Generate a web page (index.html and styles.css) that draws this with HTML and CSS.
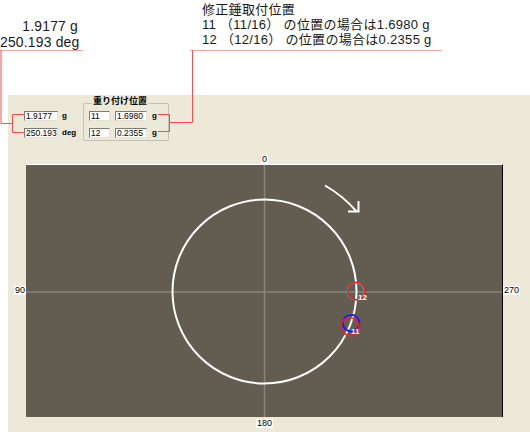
FILE: index.html
```html
<!DOCTYPE html>
<html lang="ja">
<head>
<meta charset="utf-8">
<title>修正錘取付位置</title>
<link rel="stylesheet" href="styles.css">
</head>
<body>
<div class="page">
  <header class="top">
    <div class="result">
      <div>1.9177 g</div>
      <div>250.193 deg</div>
    </div>
    <div class="advice">
      <div>修正錘取付位置</div>
      <div>11 （11/16） の位置の場合は1.6980 g</div>
      <div>12 （12/16） の位置の場合は0.2355 g</div>
    </div>
  </header>

  <main class="panel">
    <div class="controls">
      <div class="vals">
        <div class="row"><span class="box w34">1.9177</span><span class="unit">g</span></div>
        <div class="row row2"><span class="box w34">250.193</span><span class="unit">deg</span></div>
      </div>
      <div class="group">
        <span class="group-title">重り付け位置</span>
        <div class="row"><span class="box w21">11</span><span class="box w32">1.6980</span><span class="unit">g</span></div>
        <div class="row row2"><span class="box w21">12</span><span class="box w32">0.2355</span><span class="unit">g</span></div>
      </div>
    </div>

    <div class="chart">
      <span class="lbl lbl-top">0</span>
      <span class="lbl lbl-left">90</span>
      <div class="plot">
        <svg class="plot-svg" width="476" height="252" viewBox="0 0 476 252">
          <line class="axis" x1="0" y1="127" x2="476" y2="127"/>
          <line class="axis" x1="238.5" y1="0" x2="238.5" y2="252"/>
          <circle cx="238.5" cy="126.5" r="92" fill="none" stroke="#fff" stroke-width="2"/>
          <path d="M 299 20.5 A 122 122 0 0 1 330.6 46.5" fill="none" stroke="#fff" stroke-width="2"/>
          <path d="M 322 46.5 H 332.5 V 36" fill="none" stroke="#fff" stroke-width="2"/>
          <circle cx="329.5" cy="126.2" r="8.5" fill="none" stroke="#18b8c0" stroke-width="1.5"/>
          <circle cx="330.3" cy="126" r="8.8" fill="none" stroke="#ff1a1a" stroke-width="1.5"/>
          <text class="mk" x="332" y="134.5">12</text>
          <circle cx="325.1" cy="157.5" r="8.5" fill="none" stroke="#b8b020" stroke-width="1"/>
          <circle cx="325.1" cy="158" r="8.3" fill="none" stroke="#1a1aff" stroke-width="2"/>
          <circle cx="324" cy="161.5" r="9" fill="none" stroke="#ff1a1a" stroke-width="1.5"/>
          <text class="mk" x="325" y="169">11</text>
        </svg>
      </div>
      <span class="lbl lbl-right">270</span>
      <span class="lbl lbl-bottom">180</span>
    </div>
  </main>

  <svg class="wires" width="530" height="432" viewBox="0 0 530 432">
    <polyline points="1,50 1,123.5 12.5,123.5" />
    <polyline points="24,114.5 12.5,114.5 12.5,132.5 24,132.5" />
    <polyline points="192.5,50 192.5,122.5 169.5,122.5" />
    <polyline points="158,114.5 169.5,114.5 169.5,131.5 158,131.5" />
  </svg>
</div>
</body>
</html>
```

FILE: styles.css
```css
* { box-sizing: border-box; }

html, body {
  margin: 0;
  padding: 0;
  background: #fff;
}

.page {
  position: relative;
  width: 530px;
  height: 432px;
  overflow: hidden;
  font-family: "Noto Sans CJK JP", sans-serif;
  color: #000;
}

/* ---------- top text ---------- */
.top {
  display: flex;
  height: 95px;
}

.result {
  width: 83px;
  height: 51px;
  padding: 18px 5px 0 0;
  font-family: "Liberation Sans", "Noto Sans CJK JP", sans-serif;
  font-size: 13.9px;
  line-height: 16px;
  letter-spacing: 0.2px;
  text-align: right;
  white-space: nowrap;
  color: #1a1a1a;
  border-bottom: 1px solid #f3a4a4;
}

.advice {
  margin-left: 107px;
  width: 252px;
  height: 51px;
  padding: 2px 0 0 12px;
  font-family: "Liberation Sans", "Noto Sans CJK JP", sans-serif;
  font-size: 13px;
  line-height: 15px;
  letter-spacing: 0.3px;
  white-space: nowrap;
  color: #1a1a1a;
  border-bottom: 1px solid #f3a4a4;
}

/* ---------- panel ---------- */
.panel {
  margin-left: 8px;
  height: 337px;
  background: #ece9d8;
}

.controls {
  display: flex;
  height: 46px;
  padding: 8px 0 0 16px;
}

.vals {
  width: 59px;
  padding-top: 8px;
}

.row {
  display: flex;
  align-items: center;
  gap: 4px;
  height: 10px;
}

.row2 { margin-top: 7px; }

.box {
  display: block;
  height: 10px;
  background: #fff;
  border-top: 1px solid #7a7a7a;
  border-left: 1px solid #7a7a7a;
  border-right: 1px solid #e4e2d6;
  border-bottom: 1px solid #e4e2d6;
  font-family: "Liberation Sans", sans-serif;
  font-size: 8.5px;
  line-height: 8px;
  padding-left: 1px;
  white-space: nowrap;
}

.w34 { width: 34px; }
.w21 { width: 21px; }
.w32 { width: 32px; }

.unit {
  font-family: "Liberation Sans", sans-serif;
  font-weight: bold;
  font-size: 8px;
  line-height: 8px;
}

.group {
  width: 86px;
  height: 38px;
  border: 1px solid #c4c1b4;
  border-radius: 2px;
  padding: 0 0 0 5px;
}

.group .row { gap: 5px; }

.group-title {
  display: block;
  width: max-content;
  margin: -8px 0 5px 3px;
  padding: 0 1px;
  background: #ece9d8;
  font-size: 9px;
  line-height: 10px;
  font-weight: bold;
}

/* ---------- chart ---------- */
.chart {
  display: grid;
  grid-template-columns: 18px 477px 1fr;
  grid-template-rows: 9px 253px auto;
  margin-top: 14px;
}

.lbl {
  font-family: "Liberation Sans", sans-serif;
  font-size: 9px;
  line-height: 9px;
  background: #fff;
  padding: 0 1px;
}

.lbl-top {
  grid-column: 2;
  grid-row: 1;
  justify-self: center;
  align-self: end;
}

.lbl-left {
  grid-column: 1;
  grid-row: 2;
  justify-self: end;
  align-self: center;
}

.lbl-right {
  grid-column: 3;
  grid-row: 2;
  justify-self: start;
  align-self: center;
}

.lbl-bottom {
  grid-column: 2;
  grid-row: 3;
  justify-self: center;
  margin-top: 2px;
}

.plot {
  grid-column: 2;
  grid-row: 2;
  background: #625c51;
  border-top: 1px solid #fff;
  border-right: 1px solid #000;
  overflow: hidden;
}

.plot-svg { display: block; }

.axis {
  stroke: #8a857a;
  stroke-width: 1.5;
}

.mk {
  fill: #fff;
  font-family: "Liberation Sans", sans-serif;
  font-size: 8px;
  font-weight: bold;
}

/* ---------- connector wires ---------- */
.wires {
  position: absolute;
  left: 0;
  top: 0;
  pointer-events: none;
}

.wires polyline {
  fill: none;
  stroke: #ff4a4a;
  stroke-width: 1;
}
```
